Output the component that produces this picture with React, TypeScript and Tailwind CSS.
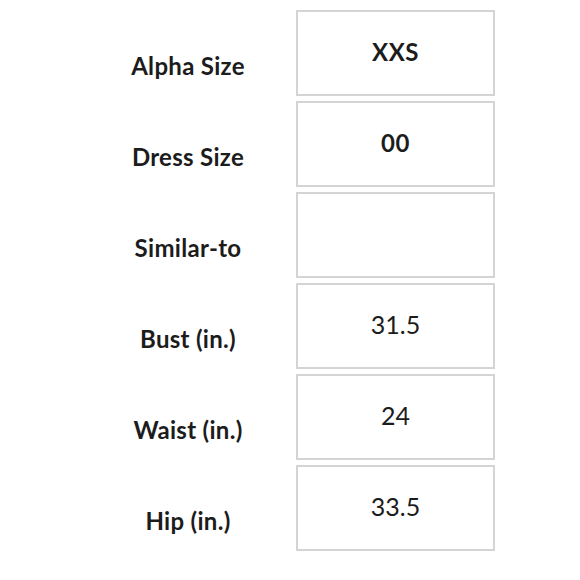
const rows = [
  { label: "Alpha Size", value: "XXS", bold: true },
  { label: "Dress Size", value: "00", bold: true },
  { label: "Similar-to", value: "", bold: false },
  { label: "Bust (in.)", value: "31.5", bold: false },
  { label: "Waist (in.)", value: "24", bold: false },
  { label: "Hip (in.)", value: "33.5", bold: false },
];

export default function App() {
  return (
    <div className="w-[580px] h-[580px] bg-white overflow-hidden font-['Lato',sans-serif] text-[#1c1c1c]">
      <div className="flex flex-col gap-[5px] pt-[10px] pl-[84px]">
        {rows.map((r) => (
          <div key={r.label} className="flex gap-[4px]">
            <div className="w-[208px] h-[86px] flex items-center justify-center pt-[26px]">
              <span className="text-[24px] font-bold tracking-[0.3px]">{r.label}</span>
            </div>
            <div className="w-[199px] h-[86px] border-2 border-[#d3d5d5] flex items-center justify-center pb-[2px]">
              <span className={r.bold ? "text-[24px] font-bold tracking-[0.5px]" : "text-[25px] font-normal"}>
                {r.value}
              </span>
            </div>
          </div>
        ))}
      </div>
    </div>
  );
}
